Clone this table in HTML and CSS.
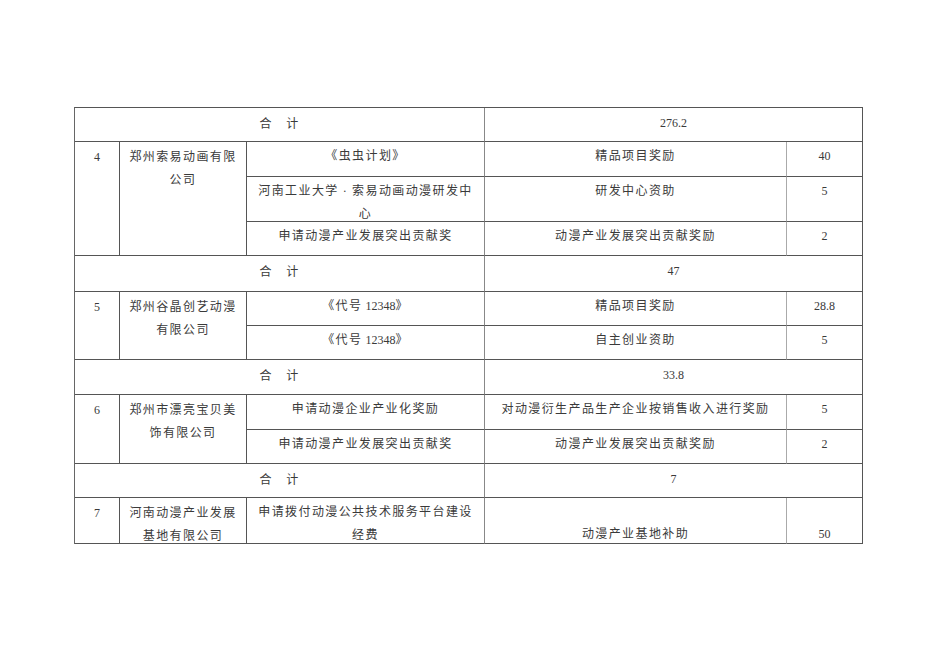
FILE: index.html
```html
<!DOCTYPE html>
<html lang="zh-CN">
<head>
<meta charset="utf-8">
<title>动漫产业资助项目表</title>
<link rel="stylesheet" href="styles.css">
</head>
<body>
<div class="page">
  <div class="sheet">
    <div class="c total-label">合　计</div>
    <div class="c total-value">276.2</div>

    <div class="c num r3">4</div>
    <div class="c company r3">郑州索易动画有限公司</div>
    <div class="c item">《虫虫计划》</div>
    <div class="c type">精品项目奖励</div>
    <div class="c amt">40</div>
    <div class="c item">河南工业大学<span class="dot">·</span>索易动画动漫研发中<br>心</div>
    <div class="c type">研发中心资助</div>
    <div class="c amt">5</div>
    <div class="c item">申请动漫产业发展突出贡献奖</div>
    <div class="c type">动漫产业发展突出贡献奖励</div>
    <div class="c amt">2</div>

    <div class="c total-label">合　计</div>
    <div class="c total-value">47</div>

    <div class="c num r2">5</div>
    <div class="c company r2">郑州谷晶创艺动漫有限公司</div>
    <div class="c item">《代号<span class="lat"> 12348</span>》</div>
    <div class="c type">精品项目奖励</div>
    <div class="c amt">28.8</div>
    <div class="c item">《代号<span class="lat"> 12348</span>》</div>
    <div class="c type">自主创业资助</div>
    <div class="c amt">5</div>

    <div class="c total-label">合　计</div>
    <div class="c total-value">33.8</div>

    <div class="c num r2">6</div>
    <div class="c company r2">郑州市漂亮宝贝美饰有限公司</div>
    <div class="c item">申请动漫企业产业化奖励</div>
    <div class="c type">对动漫衍生产品生产企业按销售收入进行奖励</div>
    <div class="c amt">5</div>
    <div class="c item">申请动漫产业发展突出贡献奖</div>
    <div class="c type">动漫产业发展突出贡献奖励</div>
    <div class="c amt">2</div>

    <div class="c total-label">合　计</div>
    <div class="c total-value">7</div>

    <div class="c num">7</div>
    <div class="c company">河南动漫产业发展基地有限公司</div>
    <div class="c item">申请拨付动漫公共技术服务平台建设经费</div>
    <div class="c type bottom">动漫产业基地补助</div>
    <div class="c amt bottom">50</div>
  </div>
</div>
</body>
</html>
```

FILE: styles.css
```css
html, body {
  margin: 0;
  padding: 0;
  background: #ffffff;
}

body {
  font-family: "Liberation Serif", "Noto Sans CJK SC", serif;
  font-size: 12px;
  color: #3a3a3a;
}

.page {
  padding: 107px 0 0 74px;
}

.sheet {
  display: grid;
  grid-template-columns: 45px 127px 238px 302px 76px;
  grid-template-rows: 34px 35px 45px 34px 36px 34px 34px 35px 35px 34px 34px 46px;
  width: 789px;
  box-sizing: border-box;
  border-top: 1px solid #555;
  border-left: 1px solid #666;
}

.c {
  box-sizing: border-box;
  border-right: 1px solid #555;
  border-bottom: 1px solid #555;
  text-align: center;
  line-height: 23px;
  padding-top: 3px;
  letter-spacing: 1.4px;
}

.total-label {
  grid-column: span 3;
  padding-top: 5px;
  border-right-color: #888;
}

.total-value {
  grid-column: span 2;
  padding-top: 4px;
  letter-spacing: 0;
}

.r2 { grid-row: span 2; }
.r3 { grid-row: span 3; }

.num {
  letter-spacing: 0;
  padding-top: 4px;
}

.company {
  padding: 4px 6px 0;
}

.item {
  padding-left: 6px;
  padding-right: 6px;
  border-right-color: #888;
}

.type {
  border-right-color: #aaa;
}

.amt {
  letter-spacing: 0;
}

.lat {
  letter-spacing: 0;
}

.dot {
  margin: 0 4px;
}

.bottom {
  display: flex;
  align-items: flex-end;
  justify-content: center;
  line-height: 17px;
  padding-top: 0;
}
```
